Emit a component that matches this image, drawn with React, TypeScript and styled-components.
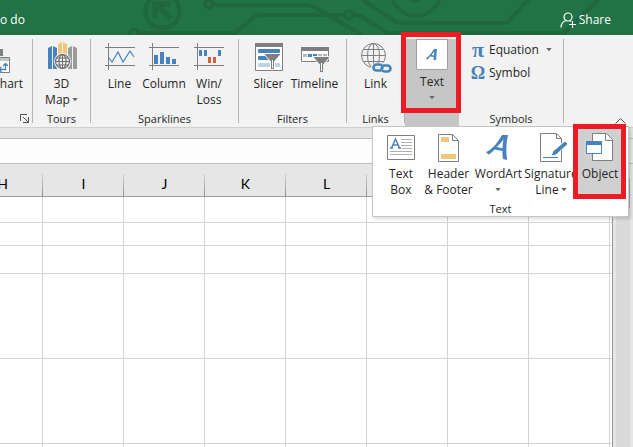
import React from 'react';
import styled, { createGlobalStyle, css } from 'styled-components';

const GlobalStyle = createGlobalStyle`
  *, *::before, *::after { box-sizing: border-box; }
  html, body, #root { height: 100%; }
  body {
    margin: 0;
    overflow: hidden;
    background: #fff;
    color: #262626;
    font-family: 'Open Sans', 'Noto Sans', sans-serif;
    font-size: 12px;
    line-height: 16px;
  }
  svg { display: block; flex: none; }
`;

const blue = '#4682bb';
const grey = '#7f7f7f';

const Window = styled.div`
  height: 100%;
  display: flex;
  flex-direction: column;
`;

const TitleBar = styled.header`
  position: relative;
  flex: none;
  height: 35px;
  display: flex;
  align-items: center;
  justify-content: space-between;
  padding: 4px 22px 0 0;
  overflow: hidden;
  background: #217346;
`;

const Circuit = styled.svg`
  position: absolute;
  inset: 0 auto auto 0;
`;

const TitleButton = styled.button`
  position: relative;
  display: flex;
  align-items: center;
  gap: 3px;
  padding: 0;
  border: 0;
  background: none;
  color: #fff;
  font: inherit;
  white-space: nowrap;
`;

const Ribbon = styled.div`
  position: relative;
  flex: none;
  height: 93px;
  display: flex;
  padding-top: 4px;
  border-bottom: 1px solid #d0d0d0;
  background: #f2f2f2;
`;

const Group = styled.section<{ $width: number; $active?: boolean }>`
  flex: none;
  width: ${p => p.$width}px;
  height: 84px;
  display: flex;
  flex-direction: column;
  justify-content: space-between;
  border-right: 1px solid #b4b4b4;
  ${p => p.$active && css`
    height: 88px;
    border-right: 0;
    background: #c6c6c6;
  `}
`;

const GroupTitle = styled.h2`
  height: 12px;
  margin: 0;
  font-size: 11px;
  font-weight: 400;
  line-height: 16px;
  text-align: center;
`;

const Launcher = styled.button`
  align-self: flex-end;
  margin: 0 3px 0 0;
  padding: 0;
  border: 0;
  background: none;
`;

const Tools = styled.div<{ $clipped?: boolean }>`
  display: flex;
  justify-content: ${p => (p.$clipped ? 'flex-end' : 'center')};
  padding-right: ${p => (p.$clipped ? 9 : 0)}px;
  overflow: ${p => (p.$clipped ? 'hidden' : 'visible')};
`;

const Tool = styled.button<{ $width?: number; $selected?: boolean; $raised?: boolean }>`
  flex: none;
  width: ${p => (p.$width ? `${p.$width}px` : 'auto')};
  display: flex;
  flex-direction: column;
  align-items: center;
  padding: ${p => (p.$raised ? 0 : 2)}px 0 0;
  border: 0;
  background: ${p => (p.$selected ? '#d0d0d0' : 'none')};
  color: inherit;
  font: inherit;
  white-space: nowrap;
`;

const ToolLabel = styled.span`
  display: flex;
  flex-direction: column;
  align-items: center;
  margin-top: 3px;
`;

const Line = styled.span`
  height: 16px;
  display: flex;
  align-items: center;
  gap: 2px;
`;

const SymbolList = styled.div`
  display: flex;
  flex-direction: column;
  gap: 7px;
  padding: 3px 0 0 12px;
`;

const SymbolButton = styled.button`
  display: flex;
  align-items: center;
  gap: 4px;
  padding: 0;
  border: 0;
  background: none;
  color: inherit;
  font: inherit;
`;

const Glyph = styled.span<{ $size: number }>`
  width: 14px;
  display: flex;
  justify-content: center;
  color: ${blue};
  font: bold ${p => p.$size}px/16px 'Liberation Serif', serif;
`;

const CaretSlot = styled.span`
  margin-left: 3px;
`;

const Collapse = styled.button`
  align-self: flex-end;
  margin: 0 7px 3px auto;
  padding: 0;
  border: 0;
  background: none;
`;

const TextMenu = styled.div`
  position: absolute;
  top: 91px;
  left: 372px;
  z-index: 2;
  width: 257px;
  height: 91px;
  display: flex;
  flex-direction: column;
  justify-content: space-between;
  padding-bottom: 3px;
  border: 1px solid #c6c6c6;
  background: #fff;
  box-shadow: 2px 2px 3px rgba(0, 0, 0, 0.15);
`;

const MenuTools = styled.div`
  height: 70px;
  display: flex;
  padding: 2px 0 0 5px;
`;

const Highlight = styled.div<{ $top: number; $left: number; $width: number; $height: number }>`
  position: absolute;
  z-index: 3;
  top: ${p => p.$top}px;
  left: ${p => p.$left}px;
  width: ${p => p.$width}px;
  height: ${p => p.$height}px;
  border: 5px solid #ed1c24;
  pointer-events: none;
`;

const Strip = styled.div`
  flex: none;
  height: 11px;
  border-bottom: 1px solid #c0c0c0;
  background: #e6e6e6;
`;

const FormulaRow = styled.div`
  flex: none;
  height: 25px;
  display: flex;
  border-bottom: 1px solid #c0c0c0;
  background: #e6e6e6;
`;

const FormulaInput = styled.input`
  flex: 1;
  min-width: 0;
  margin-right: 21px;
  padding: 0 4px;
  border: 0;
  background: #fdfdfd;
  font: inherit;
`;

const Workspace = styled.main`
  flex: 1;
  min-height: 0;
  display: flex;
  background: #e6e6e6;
`;

const Sheet = styled.div`
  flex: 1;
  min-width: 0;
  overflow: hidden;
  border-right: 1px solid #9b9b9b;
  background: #fff;
`;

const Grid = styled.table`
  width: 810px;
  margin-left: -38px;
  table-layout: fixed;
  border-collapse: separate;
  border-spacing: 0;
`;

const ColumnHead = styled.th`
  height: 33px;
  padding: 8px 0 0;
  border-bottom: 1px solid #9b9b9b;
  background: linear-gradient(#d0d0d0, #909090) right bottom / 1px 22px no-repeat #e6e6e6;
  color: #000;
  font: 14px/18px Lato, 'Open Sans', sans-serif;
`;

const Cell = styled.td<{ $height: number }>`
  height: ${p => p.$height}px;
  padding: 0;
  border-right: 1px solid #d4d4d4;
  border-bottom: 1px solid #d4d4d4;
`;

const Scrollbar = styled.div`
  flex: none;
  width: 20px;
  padding: 14px 3px 0;
  background: linear-gradient(#dadada, #dadada) center / 14px 100% no-repeat #e6e6e6;
`;

const ScrollThumb = styled.div`
  height: 30px;
  border: 1px solid #ababab;
  background: #fff;
`;

const Caret = () => (
  <svg width="6" height="4" viewBox="0 0 6 4" aria-hidden="true"><path d="M.3 0h5.400L3 3.300z" fill="#666" /></svg>
);

const PivotIcon = () => (
  <svg width="32" height="32" viewBox="0 0 32 32" aria-hidden="true">
    <path d="M14 8h11v7H14z" fill={grey} />
    <path d="M8.500 16.500h23v15h-23z" fill="#fff" stroke={grey} />
    <path d="M9 17h22v3H9z" fill="#c4c4c4" />
    <path d="M21 28.500h6.500v-6M25 25l2.500-2.500L30 25M23.500 26L21 28.500l2.500 2.500" fill="none" stroke={blue} strokeWidth="1.300" />
  </svg>
);

const MapIcon = () => (
  <svg width="32" height="32" viewBox="0 0 32 32" aria-hidden="true">
    <path d="M2 7l4-2v23H2zM7 5l4 2v21H7z" fill={blue} />
    <path d="M12 3l4-2v22h-4zM17 1l4 2v20h-4z" fill="#efc77c" />
    <path d="M22 7l4-2v23h-4zM27 5l4 2v21h-4z" fill="#9b9b9b" />
    <circle cx="16.500" cy="20.500" r="8.500" fill="#f2f2f2" />
    <g fill="none" stroke="#6e6e6e" strokeWidth="1.200">
      <circle cx="16.500" cy="20.500" r="7" /><ellipse cx="16.500" cy="20.500" rx="3.500" ry="7" />
      <path d="M9.500 20.500h14M16.500 13.500v14M10.500 17h12M10.500 24h12" strokeWidth="1" />
    </g>
  </svg>
);

const SparkFrame = ({ children }: { children: React.ReactNode }) => (
  <svg width="32" height="32" viewBox="0 0 32 32" aria-hidden="true">
    <path d="M1 6.500h30M1 24.500h30M4.500 2v27" fill="none" stroke={grey} />
    {children}
  </svg>
);

const LineIcon = () => (
  <SparkFrame><path d="M5 17l3 4 6-10 5 10 7-11 4 6" fill="none" stroke={blue} strokeWidth="1.200" /></SparkFrame>
);
const ColumnIcon = () => (
  <SparkFrame><path d="M6 14h4v9H6zM12 11h4v12h-4zM18 16h4v7h-4zM24 18h4v5h-4z" fill={blue} /></SparkFrame>
);
const WinLossIcon = () => (
  <SparkFrame>
    <path d="M6 9h3v6H6zM11 9h3v6h-3zM25 9h3v6h-3z" fill={blue} />
    <path d="M15 16h3v6h-3zM20 16h3v6h-3z" fill="#d6603c" />
  </SparkFrame>
);

const SlicerIcon = () => (
  <svg width="32" height="32" viewBox="0 0 32 32" aria-hidden="true">
    <path d="M2.500 2.500h27v27h-27z" fill="#fff" stroke={grey} /><path d="M2 2h28v4H2z" fill={grey} />
    <rect x="5" y="8" width="22" height="4" rx="1" fill={blue} />
    <rect x="5" y="15" width="14" height="4" rx="1" fill={blue} />
    <rect x="5" y="22" width="22" height="4" rx="1" fill="#bdd1e6" />
    <path d="M10.500 12.500h18l-7 8v8h-4v-8z" fill={grey} stroke="#fff" />
    <path d="M19 19h1v8h-1z" fill="#fff" />
  </svg>
);

const TimelineIcon = () => (
  <svg width="32" height="32" viewBox="0 0 32 32" aria-hidden="true">
    <path d="M2.500 6.500h27v14h-27z" fill="#fff" stroke={grey} /><path d="M2 6h28v4H2z" fill={grey} />
    <path d="M4 13h4v3H4zM19 13h4v3h-4zM24 13h4v3h-4z" fill="#b8b8b8" />
    <path d="M9 13h4v3H9zM14 13h4v3h-4z" fill={blue} />
    <path d="M13.500 15.500h18l-7 8v8h-4v-8z" fill={grey} stroke="#f2f2f2" />
    <path d="M22 22h1v8h-1z" fill="#fff" />
  </svg>
);

const LinkIcon = () => (
  <svg width="32" height="32" viewBox="0 0 32 32" aria-hidden="true">
    <g fill="none" stroke={grey}>
      <circle cx="13.500" cy="14.500" r="12" /><ellipse cx="13.500" cy="14.500" rx="6" ry="12" />
      <path d="M1.500 14.500h24M13.500 2.500v24M3.500 8.500h20M3.500 20.500h20" />
    </g>
    <rect x="11" y="22" width="21" height="10" rx="5" fill="#f2f2f2" />
    <path d="M21 29.500h-4.500a3 3 0 0 1 0-6H19q4 0 3.500 4M23 24.500h4.500a3 3 0 0 1 0 6H25q-4 0-3.500-4" fill="none" stroke={blue} strokeWidth="2.600" />
  </svg>
);

const TextIcon = () => (
  <svg width="32" height="32" viewBox="0 0 32 32" aria-hidden="true">
    <path d="M.5.5h31v30H.5z" fill="#fff" stroke="#a0a0a0" />
    <path d="M10 19c3-1 6-6 8-9h3l-1 11h-2.500l.3-3-3.800-.6c-1 1.600-2 2.600-3 3.200zM15.500 16l2.500.4.400-4.200z" fill={blue} fillRule="evenodd" />
  </svg>
);

const TextBoxIcon = () => (
  <svg width="32" height="32" viewBox="0 0 32 32" aria-hidden="true">
    <path d="M2.500 4.500h27v24h-27z" fill="#fff" stroke={grey} />
    <path d="M6.500 17l4-9 4 9M8 14h5M5 17h3M13 17h3" fill="none" stroke={blue} strokeWidth="1.500" />
    <path d="M16 8.500h11M16 11.500h11M16 14.500h11M17 17.500h10M5 20.500h22M5 23.500h22" stroke="#b0b0b0" />
  </svg>
);

const HeaderIcon = () => (
  <svg width="32" height="32" viewBox="0 0 32 32" aria-hidden="true">
    <path d="M5.500 3.500h14l6 6v21h-20z" fill="#fff" stroke={grey} />
    <path d="M19.500 3.500v6h6" fill="none" stroke={grey} />
    <path d="M8 6h8v5H8zM8 23h15v5H8z" fill="#efc77c" />
  </svg>
);

const WordArtIcon = () => (
  <svg width="32" height="32" viewBox="0 0 32 32" aria-hidden="true">
    <path d="M3 21c6-2 12-10 16-17h6c-2 8-2 16-1 25l-4-1c-.5-3-.6-5-.5-8l-8-1.500c-2 2.500-4 4-6 5zM13.500 16l6 1.200c.1-3 .4-6 1-9-2 3-4.500 6-7 7.800z" fill={blue} fillRule="evenodd" />
  </svg>
);

const SignatureIcon = () => (
  <svg width="32" height="32" viewBox="0 0 32 32" aria-hidden="true">
    <path d="M5.500 2.500h16l5 5v23h-21z" fill="#fff" stroke={grey} />
    <path d="M21.500 2.500v5h5" fill="none" stroke={grey} />
    <path d="M8 26.500h15" stroke={blue} />
    <path d="M16 25l2-5 12-10 3 3-12 11z" fill={blue} stroke="#fff" />
  </svg>
);

const ObjectIcon = () => (
  <svg width="32" height="32" viewBox="0 0 32 32" aria-hidden="true">
    <path d="M8.500 2.500h14l6 6v21h-20z" fill="#fff" stroke={grey} />
    <path d="M21.500 2.500v7h7" fill="none" stroke={grey} />
    <path d="M2.500 10.500h15v12h-15z" fill="#fff" stroke={blue} /><path d="M2 10h16v4H2z" fill={blue} />
  </svg>
);

const ShareIcon = () => (
  <svg width="16" height="16" viewBox="0 0 16 16" fill="none" stroke="#fff" strokeWidth="1.200" aria-hidden="true">
    <circle cx="8" cy="5" r="4" /><path d="M1 15.500c0-4 2-6 5-7M10 8.500l1 1M9 12.500h7M12.500 9v7" />
  </svg>
);

interface ToolSpec {
  icon: () => React.JSX.Element;
  lines: string[];
  width?: number;
  menu?: boolean;
  selected?: boolean;
  raised?: boolean;
}

const ToolButton = ({ icon: Icon, lines, width, menu, selected, raised }: ToolSpec) => (
  <Tool type="button" $width={width} $selected={selected} $raised={raised}>
    <Icon />
    <ToolLabel>
      {lines.map((line, i) => (
        <Line key={line + i}>
          {line}
          {menu && i === lines.length - 1 && <Caret />}
        </Line>
      ))}
    </ToolLabel>
  </Tool>
);

const menuTools: ToolSpec[] = [
  { icon: TextBoxIcon, lines: ['Text', 'Box'], width: 46 },
  { icon: HeaderIcon, lines: ['Header', '& Footer'], width: 49 },
  { icon: WordArtIcon, lines: ['WordArt', ''], width: 51, menu: true },
  { icon: SignatureIcon, lines: ['Signature', 'Line'], width: 54, menu: true },
  { icon: ObjectIcon, lines: ['Object'], width: 44, selected: true },
];

const columns = ['H', 'I', 'J', 'K', 'L', 'M', 'N', 'O', 'P', 'Q'];
const rowHeights = [26, 23, 28, 85, 85, 85];

export default function App() {
  return (
    <Window>
      <GlobalStyle />
      <TitleBar>
        <Circuit width="633" height="35" viewBox="0 0 633 35" fill="none" stroke="#20663f" strokeWidth="4" aria-hidden="true">
          <circle cx="162.500" cy="11" r="17" />
          <path d="M171 18L156 4M155 18V4h15" strokeWidth="5" />
          <circle cx="209" cy="4" r="4" strokeWidth="3" />
          <circle cx="134" cy="33" r="4" strokeWidth="3" />
          <path d="M138 33h97l17-14q4-4 10-4h83M213 5h92q6 0 11 3l46 27M353 15q8 0 14 5l20 13h177l35-34M363 0l30 20q4 3 9 3h105l22-24" />
          <circle cx="349" cy="15" r="4" strokeWidth="3" />
          <circle cx="416" cy="-9" r="25" />
          <path d="M406-4l9 5 9-5" />
        </Circuit>
        <TitleButton type="button">o do</TitleButton>
        <TitleButton type="button"><ShareIcon />Share</TitleButton>
      </TitleBar>

      <Ribbon>
        <Group $width={33}>
          <Tools $clipped><ToolButton icon={PivotIcon} lines={['PivotChart']} /></Tools>
          <Launcher type="button" aria-label="Chart options">
            <svg width="9" height="9" viewBox="0 0 9 9" fill="none" stroke="#555"><path d="M.5 7V.5H7M3 3l5 5M8.500 3v5.500H3" /></svg>
          </Launcher>
        </Group>
        <Group $width={58}>
          <Tools><ToolButton icon={MapIcon} lines={['3D', 'Map']} menu /></Tools>
          <GroupTitle>Tours</GroupTitle>
        </Group>
        <Group $width={148}>
          <Tools>
            <ToolButton icon={LineIcon} lines={['Line']} width={43} />
            <ToolButton icon={ColumnIcon} lines={['Column']} width={46} />
            <ToolButton icon={WinLossIcon} lines={['Win/', 'Loss']} width={44} />
          </Tools>
          <GroupTitle>Sparklines</GroupTitle>
        </Group>
        <Group $width={108}>
          <Tools>
            <ToolButton icon={SlicerIcon} lines={['Slicer']} width={44} />
            <ToolButton icon={TimelineIcon} lines={['Timeline']} width={48} />
          </Tools>
          <GroupTitle>Filters</GroupTitle>
        </Group>
        <Group $width={58}>
          <Tools><ToolButton icon={LinkIcon} lines={['Link']} /></Tools>
          <GroupTitle>Links</GroupTitle>
        </Group>
        <Group $width={54} $active>
          <Tools><ToolButton icon={TextIcon} lines={['Text', '']} menu raised /></Tools>
        </Group>
        <Group $width={105}>
          <SymbolList>
            <SymbolButton type="button"><Glyph $size={22}>π</Glyph>Equation<CaretSlot><Caret /></CaretSlot></SymbolButton>
            <SymbolButton type="button"><Glyph $size={18}>Ω</Glyph>Symbol</SymbolButton>
          </SymbolList>
          <GroupTitle>Symbols</GroupTitle>
        </Group>
        <Collapse type="button" aria-label="Collapse ribbon">
          <svg width="11" height="6" viewBox="0 0 11 6" fill="none" stroke="#555"><path d="M.5 5.500l5-5 5 5" /></svg>
        </Collapse>

        <TextMenu>
          <MenuTools>{menuTools.map(t => <ToolButton key={t.lines[0]} {...t} />)}</MenuTools>
          <GroupTitle>Text</GroupTitle>
        </TextMenu>
        <Highlight $top={-3} $left={401} $width={60} $height={81} />
        <Highlight $top={89} $left={573} $width={53} $height={75} />
      </Ribbon>

      <Strip />
      <FormulaRow><FormulaInput aria-label="Formula" /></FormulaRow>
      <Workspace>
        <Sheet>
          <Grid>
            <thead><tr>{columns.map(c => <ColumnHead key={c} scope="col">{c}</ColumnHead>)}</tr></thead>
            <tbody>
              {rowHeights.map((h, i) => (
                <tr key={i}>{columns.map(c => <Cell key={c} $height={h} />)}</tr>
              ))}
            </tbody>
          </Grid>
        </Sheet>
        <Scrollbar><ScrollThumb /></Scrollbar>
      </Workspace>
    </Window>
  );
}
